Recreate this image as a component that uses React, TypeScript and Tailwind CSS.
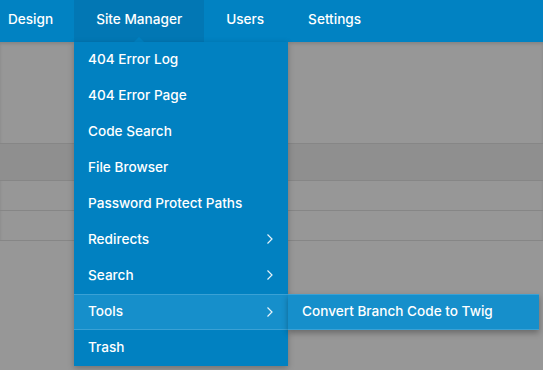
import React from "react";

const navItems = ["Design", "Site Manager", "Users", "Settings"];

type MenuItem = { label: string; sub?: boolean; active?: boolean };

const menuItems: MenuItem[] = [
  { label: "404 Error Log" },
  { label: "404 Error Page" },
  { label: "Code Search" },
  { label: "File Browser" },
  { label: "Password Protect Paths" },
  { label: "Redirects", sub: true },
  { label: "Search", sub: true },
  { label: "Tools", sub: true, active: true },
  { label: "Trash" },
];

function Chevron() {
  return (
    <svg width="8" height="12" viewBox="0 0 8 12" fill="none" className="text-white/90">
      <path d="M1.5 1.5 6 6l-4.5 4.5" stroke="currentColor" strokeWidth="1.2" />
    </svg>
  );
}

export default function App() {
  return (
    <div
      className="relative h-[370px] w-[543px] overflow-hidden bg-[#979797] text-white"
      style={{ fontFamily: "Inter, 'Liberation Sans', sans-serif" }}
    >
      {/* top navigation */}
      <nav className="flex h-[42px] bg-[#0182c2] text-[13.6px] font-medium">
        {navItems.map((item, i) => (
          <div
            key={item}
            className={
              i === 0
                ? "flex items-center pb-[4px] pl-[8px] pr-[21px]"
                : i === 1
                  ? "relative flex items-center bg-[#0277b4] px-[22px] pb-[4px]"
                  : "flex items-center px-[22px] pb-[4px]"
            }
          >
            {item}
            {i === 1 && (
              <span className="absolute bottom-0 left-1/2 h-0 w-0 -translate-x-1/2 border-x-[5px] border-b-[5px] border-x-transparent border-b-[#0181c1]" />
            )}
          </div>
        ))}
      </nav>

      {/* page content behind the menu */}
      <div className="flex flex-col shadow-[inset_0_2px_3px_rgba(0,0,0,0.12)]">
        <div className="h-[101px]" />
        <div className="h-[38px] border-y border-[#868686] bg-[#8f8f8f]" />
        <div className="h-[30px] border-b border-[#868686]" />
        <div className="h-[30px] border-b border-[#868686]" />
      </div>

      {/* dropdown */}
      <div className="absolute left-[74px] top-[42px] w-[214px] bg-[#0181c1] text-[13.6px] font-medium shadow-[0_2px_6px_rgba(0,0,0,0.25)]">
        {menuItems.map((m) => (
          <div
            key={m.label}
            className={
              m.active
                ? "relative flex h-[36px] items-center justify-between border-y border-[#3aa1d5] bg-[#168fcb] pb-[1px] pl-[14px] pr-[14px]"
                : "flex h-[36px] items-center justify-between pb-[2px] pl-[14px] pr-[14px]"
            }
          >
            <span>{m.label}</span>
            {m.sub && <Chevron />}
            {m.active && (
              <div className="absolute left-full top-[-1px] flex h-[36px] w-[251px] items-center border-y border-[#3aa1d5] bg-[#168fcb] pb-[1px] pl-[14px] shadow-[0_3px_6px_rgba(0,0,0,0.3)]">
                Convert Branch Code to Twig
              </div>
            )}
          </div>
        ))}
      </div>
    </div>
  );
}
